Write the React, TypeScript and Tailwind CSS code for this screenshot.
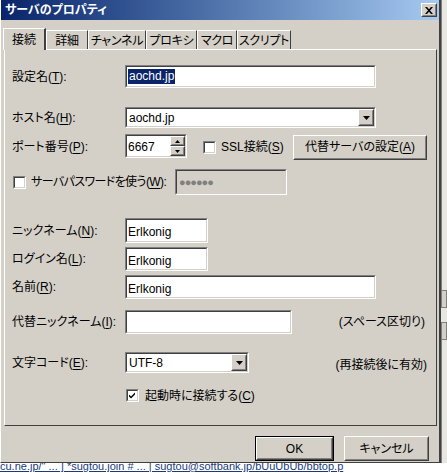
import React from "react";

const font = { fontFamily: '"Liberation Sans","Noto Sans CJK JP",sans-serif' };

function Sunken({ className = "", inner = "bg-white", children }: { className?: string; inner?: string; children?: React.ReactNode }) {
  return (
    <div className={`border border-t-[#808080] border-l-[#808080] border-b-white border-r-white ${className}`}>
      <div className={`h-full w-full border border-t-[#404040] border-l-[#404040] border-b-[#d4d0c8] border-r-[#d4d0c8] ${inner}`}>{children}</div>
    </div>
  );
}

function Raised({ className = "", children }: { className?: string; children?: React.ReactNode }) {
  return (
    <div className={`border border-t-white border-l-white border-b-[#404040] border-r-[#404040] bg-[#d4d0c8] ${className}`}>
      <div className="flex h-full w-full items-center justify-center border border-t-[#d4d0c8] border-l-[#d4d0c8] border-b-[#808080] border-r-[#808080]">{children}</div>
    </div>
  );
}

function Arrow() {
  return (
    <svg width="7" height="4" viewBox="0 0 7 4">
      <path d="M0 0h7L3.5 4z" fill="#000" />
    </svg>
  );
}

function Combo({ width, value }: { width: string; value: string }) {
  return (
    <Sunken className={`${width} h-[21px]`}>
      <div className="flex h-full items-center">
        <span className="flex-1 pl-[2px] text-[12px] text-black">{value}</span>
        <Raised className="h-[17px] w-[16px]">
          <Arrow />
        </Raised>
      </div>
    </Sunken>
  );
}

function Check({ checked }: { checked?: boolean }) {
  return (
    <Sunken className="h-[13px] w-[13px] shrink-0">
      {checked && (
        <svg width="11" height="11" viewBox="0 0 11 11" className="-ml-px -mt-px">
          <path d="M2 4.5l2 2 4-4v2l-4 4-2-2z" fill="#000" />
        </svg>
      )}
    </Sunken>
  );
}

function U({ c }: { c: string }) {
  return <span className="underline underline-offset-2">{c}</span>;
}

function Label({ children }: { children: React.ReactNode }) {
  return <div className="w-[113px] shrink-0 text-[12px] text-black">{children}</div>;
}

const tabs = [
  { t: "詳細", w: "w-[42px]" },
  { t: "チャンネル", w: "w-[58px]" },
  { t: "プロキシ", w: "w-[51px]" },
  { t: "マクロ", w: "w-[40px]" },
  { t: "スクリプト", w: "w-[54px]" },
];

export default function App() {
  return (
    <div style={font} className="flex h-[473px] w-[447px] flex-col overflow-hidden whitespace-nowrap bg-white [font-feature-settings:'palt']">
      <div className="flex h-[463px] shrink-0">
        {/* dialog */}
        <div className="flex w-[441px] flex-col border-l border-l-white border-r-2 border-r-[#404040] border-b border-b-[#404040] bg-[#d4d0c8]">
          <div className="flex h-[20px] shrink-0 items-center justify-between bg-gradient-to-r from-[#0a246a] to-[#a6caf0] pl-[4px] pr-[2px]">
            <span className="text-[12px] font-bold text-white">サーバのプロパティ</span>
            <Raised className="h-[14px] w-[16px]">
              <svg width="8" height="7" viewBox="0 0 8 7">
                <path d="M0 0h2l2 2.3L6 0h2L5 3.5 8 7H6L4 4.7 2 7H0l3-3.5z" fill="#000" />
              </svg>
            </Raised>
          </div>

          {/* tabs */}
          <div className="mt-[7px] flex h-[22px] items-end pl-[2px]">
            <div className="relative z-10 -mb-px flex h-[22px] w-[43px] items-start justify-center border-l border-t border-white border-r-2 border-r-[#404040] bg-[#d4d0c8] pt-[2px] text-[12px]">
              接続
            </div>
            {tabs.map((x) => (
              <div key={x.t} className={`flex h-[19px] ${x.w} items-start justify-center border-l border-t border-white border-r border-r-[#404040] pt-[1px] text-[12px] tracking-[-0.3px]`}>
                {x.t}
              </div>
            ))}
          </div>

          {/* panel */}
          <div className="ml-[3px] flex h-[377px] w-[433px] flex-col border border-t-white border-l-white border-r-[#404040] border-b-[#404040] pl-[7px]">
            <div className="mt-[15px] flex h-[23px] items-center">
              <Label>
                設定名(<U c="T" />):
              </Label>
              <Sunken className="h-[23px] w-[251px]">
                <div className="flex h-full items-center pl-[1px]">
                  <span className="bg-[#0a246a] px-px text-[12px] leading-[15px] text-white">aochd.jp</span>
                </div>
              </Sunken>
            </div>

            <div className="mt-[19px] flex h-[21px] items-center">
              <Label>
                ホスト名(<U c="H" />):
              </Label>
              <Combo width="w-[251px]" value="aochd.jp" />
            </div>

            <div className="mt-[6px] flex h-[26px] items-center">
              <Label>
                ポート番号(<U c="P" />):
              </Label>
              <Sunken className="mb-[2px] h-[24px] w-[62px]">
                <div className="flex h-full">
                  <span className="flex-1 pl-[1px] pt-[2px] text-[12px]">6667</span>
                  <div className="flex w-[15px] flex-col">
                    <Raised className="h-[10px] w-full">
                      <svg width="5" height="3" viewBox="0 0 5 3"><path d="M0 3h5L2.5 0z" fill="#000" /></svg>
                    </Raised>
                    <Raised className="h-[10px] w-full">
                      <svg width="5" height="3" viewBox="0 0 5 3"><path d="M0 0h5L2.5 3z" fill="#000" /></svg>
                    </Raised>
                  </div>
                </div>
              </Sunken>
              <div className="ml-[16px] flex items-center gap-[5px] text-[12px]">
                <Check />
                <span>
                  SSL接続(<U c="S" />)
                </span>
              </div>
              <Raised className="ml-auto mr-[9px] h-[25px] w-[134px] text-[12px]">
                代替サーバの設定(<U c="A" />)
              </Raised>
            </div>

            <div className="mt-[9px] flex h-[26px] items-center">
              <div className="flex w-[163px] shrink-0 items-center gap-[5px] pl-px text-[12px] tracking-[-0.6px]">
                <Check />
                <span>
                  サーバパスワードを使う(<U c="W" />):
                </span>
              </div>
              <Sunken className="h-[26px] w-[112px]" inner="bg-[#d4d0c8]">
                <div className="flex h-full items-center pl-[2px] text-[11px] tracking-[-1px] text-[#808080]">●●●●●●</div>
              </Sunken>
            </div>

            <div className="mt-[23px] flex h-[25px] items-center">
              <Label>
                ニックネーム(<U c="N" />):
              </Label>
              <Sunken className="h-[25px] w-[83px]">
                <div className="pl-[1px] pt-[3px] text-[12px]">Erlkonig</div>
              </Sunken>
            </div>

            <div className="mt-[4px] flex h-[24px] items-center">
              <Label>
                ログイン名(<U c="L" />):
              </Label>
              <Sunken className="h-[24px] w-[83px]">
                <div className="pl-[1px] pt-[3px] text-[12px]">Erlkonig</div>
              </Sunken>
            </div>

            <div className="mt-[4px] flex h-[24px] items-center">
              <Label>
                名前(<U c="R" />):
              </Label>
              <Sunken className="h-[24px] w-[251px]">
                <div className="pl-[1px] pt-[3px] text-[12px]">Erlkonig</div>
              </Sunken>
            </div>

            <div className="mt-[11px] flex h-[24px] items-center">
              <Label>
                代替ニックネーム(<U c="I" />):
              </Label>
              <Sunken className="h-[24px] w-[167px]" />
              <span className="ml-auto mr-[11px] text-[12px]">(スペース区切り)</span>
            </div>

            <div className="mt-[18px] flex h-[21px] items-center">
              <Label>
                文字コード(<U c="E" />):
              </Label>
              <Combo width="w-[124px]" value="UTF-8" />
              <span className="ml-auto mr-[9px] mt-[4px] text-[12px]">(再接続後に有効)</span>
            </div>

            <div className="ml-[113px] mt-[16px] flex h-[13px] items-center gap-[6px] pl-px text-[12px]">
              <Check checked />
              <span>
                起動時に接続する(<U c="C" />)
              </span>
            </div>
          </div>

          {/* buttons */}
          <div className="mt-[10px] flex justify-end gap-[10px] pr-[10px]">
            <div className="border border-black">
              <Raised className="h-[23px] w-[77px] text-[12px]">OK</Raised>
            </div>
            <Raised className="h-[25px] w-[85px] text-[12px]">キャンセル</Raised>
          </div>
        </div>

        {/* background window edge */}
        <div className="flex flex-1 flex-col bg-[#e8e6e1]">
          <div className="h-[290px] border-l border-[#808080]" />
          <div className="h-[18px] border border-[#808080] bg-[#d4d0c8]" />
          <div className="h-[14px]" />
          <div className="h-[18px] border border-[#808080] bg-[#d4d0c8]" />
          <div className="flex-1 border-l border-[#808080]" />
        </div>
      </div>

      <div className="h-[10px] overflow-hidden">
        <div className="-mt-[3px] text-[11px] leading-[13px] text-[#1a3a7a] underline">
          cu.ne.jp/" ... ] *sugtou.join # ... | sugtou@softbank.jp/bUuUbUb/bbtop.p
        </div>
      </div>
    </div>
  );
}
